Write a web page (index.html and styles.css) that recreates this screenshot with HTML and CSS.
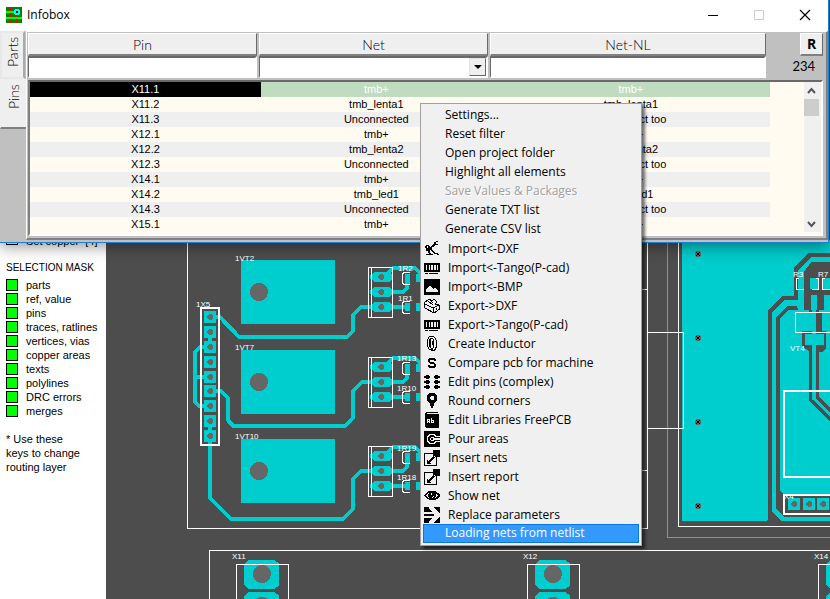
FILE: index.html
```html
<!DOCTYPE html>
<html lang="en">
<head>
<meta charset="utf-8">
<title>Infobox</title>
<link rel="stylesheet" href="styles.css">
</head>
<body>
<main class="editor">
  <aside class="layers">
    <p class="layer-hint"><span class="hint-box"></span>Set copper&nbsp; [4]</p>
    <h2 class="layers-title">SELECTION MASK</h2>
    <ul class="mask">
      <li><label><input type="checkbox" checked>parts</label></li>
      <li><label><input type="checkbox" checked>ref, value</label></li>
      <li><label><input type="checkbox" checked>pins</label></li>
      <li><label><input type="checkbox" checked>traces, ratlines</label></li>
      <li><label><input type="checkbox" checked>vertices, vias</label></li>
      <li><label><input type="checkbox" checked>copper areas</label></li>
      <li><label><input type="checkbox" checked>texts</label></li>
      <li><label><input type="checkbox" checked>polylines</label></li>
      <li><label><input type="checkbox" checked>DRC errors</label></li>
      <li><label><input type="checkbox" checked>merges</label></li>
    </ul>
    <p class="note">* Use these<br>keys to change<br>routing layer</p>
  </aside>
  <svg class="board" aria-label="Board layout">
    <defs>
      <g id="pad3">
        <path class="cu" d="M370 305h2l2-3h16l2 3v4l-2 3h-16l-2-3h-2zM370 290h2l2-3h16l2 3v4l-2 3h-16l-2-3h-2zM370 275h2l2-3h16l2 3v4l-2 3h-16l-2-3h-2z"/>
        <path class="hole" d="M378 276l2-2h2l2 2v2l-2 2h-2l-2-2zM378 291l2-2h2l2 2v2l-2 2h-2l-2-2zM378 306l2-2h2l2 2v2l-2 2h-2l-2-2z"/>
        <path class="tr" d="M386 275L393 268H415L421 274M390 292H403L407 288V280M390 307H408"/>
        <path class="cu" d="M405 274h5v10h-5zM405 303h5v8h-5zM416 274h6v8h-6zM416 303h6v8h-6z"/>
        <path class="ln" d="M368.500 267.500h24v50h-24zM371.500 267.500v50M410 272.500h-6l-2 2v8l2 2h6M410 301.500h-6l-2 2v8l2 2h6"/>
      </g>
      <g id="term">
        <path class="cu" d="M8 564l2-2 3-2h25l3 2 2 2v21l-2 2-3 2h-25l-3-2-2-2zM8 596l2-2 3-2h25l3 2 2 2v30h-35z"/>
        <circle class="hole" cx="26" cy="574" r="9"/><circle class="hole" cx="26" cy="606" r="9"/>
        <path class="ln" d="M.5 610V564.500h52V610"/>
      </g>
      <g id="sq"><path class="cu" d="M-6-6h12v12h-12z"/><path class="hole" d="M-3-1l2-2h2l2 2v2l-2 2h-2l-2-2z"/></g>
      <g id="via"><circle class="hole" r="3"/><path d="M-2-2h1v1h-1zM1-2h1v1h-1zM-1-1h2v2h-2zM-2 1h1v1h-1zM1 1h1v1h-1z"/></g>
    </defs>
    <g class="sheet" transform="translate(-106 0)">
      <path class="ln" d="M187.500 240V528.500H647.500V240M640 289.500h7M640 470.500h7"/>

      <path class="cu" d="M241 260h94v64h-94zM241 350h94v64h-94zM241 439h94v64h-94z"/>
      <circle class="hole" cx="259" cy="292" r="9"/><circle class="hole" cx="259" cy="382" r="9"/><circle class="hole" cx="259" cy="471" r="9"/>

      <path class="tr" d="M210 317H220L239 337H347L353 331V315L361 307H372"/>
      <path class="tr" d="M210 347H200L195 352V402L199 406H210M195 377H210"/>
      <path class="tr" d="M210 391H221L228 398V420L233 426H345L353 418V391L362 382H372"/>
      <path class="tr" d="M210 421V498L231 519H343L353 509V479L361 471H372M210 332V347"/>
      <use href="#sq" x="210" y="317"/><use href="#sq" x="210" y="332"/><use href="#sq" x="210" y="347"/>
      <use href="#sq" x="210" y="362"/><use href="#sq" x="210" y="377"/><use href="#sq" x="210" y="391"/>
      <use href="#sq" x="210" y="406"/><use href="#sq" x="210" y="421"/><use href="#sq" x="210" y="436"/>
      <path class="ln thick" d="M201 308h18v137h-18z"/>

      <use href="#pad3"/><use href="#pad3" y="90"/><use href="#pad3" y="179"/>

      <path class="cu" d="M682 240H830V521H682z"/>
      <path class="bg" d="M766 521.500l2-2V310l15-14h11v-28l14-15h22v4h-19l-13 13v30h-14l-12 12V511l9 10h49v9h-64z"/>
      <path class="bg" d="M776 521V317l11-11h10l1 4h-9l-9 8V491l4 3h46v23h-46l-8-8z"/>
      <path class="cu" d="M772 312l12-12h14v6h-11l-11 11V509l8 8h46v4h-48l-10-10z"/>
      <path class="bg" d="M804 272l7-10h19v33h-6v15h-7v-15h-6v15h-7z"/>
      <path class="cu" d="M798 278h6v11h-6zM810 278h9v11h-9zM822 278h8v11h-8z"/>
      <path class="bg" d="M809 312h3v19h10v-19h-3v-2h-10zM802 331h24v17l-4 4h-3v45l13 13v5l-16-16v-47h-4v47l18 18v5l-21-21v-50l-7-5z"/>
      <path class="cu" d="M805 334h19v11h-19zM812 310h4v90h-4z"/>
      <path class="ln" d="M799 278.500h-2.500v11h7M816 278.500h2.500v11h-7M825 278.500h-2.500v11h8M830 312.500h-34.500v20H830"/>
      <path class="ln thick" d="M830 391H784V477H830M830 495H784V514H830"/>
      <use href="#sq" x="794" y="504"/><use href="#sq" x="809" y="504"/><use href="#sq" x="823" y="504"/>
      <path class="thin" d="M667.500 240V537.500H1400"/>
      <path class="ln" d="M678.500 240V526.500H1400M647.500 332.500h35.500v96h-35.500"/>
      <use href="#via" x="698" y="254"/><use href="#via" x="698" y="338"/><use href="#via" x="698" y="422"/><use href="#via" x="698" y="506"/>

      <path class="ln" d="M209.500 1400V550.500H1400"/>
      <use href="#term" x="236"/><use href="#term" x="527"/><use href="#term" x="818"/>

      <g class="ref">
        <text x="235" y="261">1VT2</text><text x="235" y="350">1VT7</text><text x="235" y="439">1VT10</text>
        <text x="196" y="307">1X5</text>
        <text x="398" y="271">1R2</text><text x="398" y="301">1R1</text>
        <text x="397" y="361">1R13</text><text x="397" y="391">1R10</text>
        <text x="397" y="451">1R19</text><text x="397" y="480">1R18</text>
        <text x="793" y="277">R3</text><text x="818" y="277">R7</text><text x="790" y="351">VT4</text>
        <text x="784" y="499">X4</text>
        <text x="232" y="559">X11</text><text x="523" y="559">X12</text><text x="814" y="559">X14</text>
      </g>
    </g>
  </svg>
</main>

<section class="window">
  <header class="titlebar">
    <svg class="app-icon" width="16" height="16" viewBox="0 0 16 16"><path fill="#008000" d="M0 0h16v16H0z"/><path fill="#f00" d="M4 0h2v16H4zM10 8h2v8h-2z"/><path fill="#0f0" d="M0 4h10v2H0zM0 10h16v2H0z"/><path fill="#0ff" d="M9 2h4v1h1v4h-1v1H9V7H8V3h1z"/><path fill="#000" d="M10 4h2v2h-2z"/></svg>
    <h1 class="title">Infobox</h1>
    <div class="caption-buttons">
      <button type="button" aria-label="Minimize"><svg width="12" height="12"><path d="M1 6.500h10" stroke="#000"/></svg></button>
      <button type="button" aria-label="Maximize" disabled><svg width="12" height="12"><path d="M1.500 1.500h9v9h-9z" fill="none" stroke="#ccc"/></svg></button>
      <button type="button" aria-label="Close"><svg class="smooth" width="12" height="12"><path d="M1 1l10 10M11 1L1 11" stroke="#000" stroke-width="1.200"/></svg></button>
    </div>
  </header>
  <div class="client">
    <nav class="tabs">
      <button type="button" class="tab">Parts</button>
      <button type="button" class="tab current">Pins</button>
    </nav>
    <div class="pane">
      <div class="filters">
        <div class="fields">
          <button type="button" class="head">Pin</button>
          <button type="button" class="head">Net</button>
          <button type="button" class="head">Net-NL</button>
          <input class="field" type="text" aria-label="Filter by pin">
          <div class="combo">
            <select class="field" aria-label="Filter by net"><option></option></select>
            <span class="drop"></span>
          </div>
          <input class="field" type="text" aria-label="Filter by Net-NL">
        </div>
        <div class="side">
          <button type="button" class="reset">R</button>
          <output class="count">234</output>
        </div>
      </div>
      <div class="list">
        <table class="grid">
          <colgroup><col class="c-pin"><col class="c-net"><col class="c-nl"></colgroup>
          <tbody>
            <tr class="selected"><td>X11.1</td><td>tmb+</td><td>tmb+</td></tr>
            <tr><td>X11.2</td><td>tmb_lenta1</td><td>tmb_lenta1</td></tr>
            <tr><td>X11.3</td><td>Unconnected</td><td>Unconnect too</td></tr>
            <tr><td>X12.1</td><td>tmb+</td><td>tmb+</td></tr>
            <tr><td>X12.2</td><td>tmb_lenta2</td><td>tmb_lenta2</td></tr>
            <tr><td>X12.3</td><td>Unconnected</td><td>Unconnect too</td></tr>
            <tr><td>X14.1</td><td>tmb+</td><td>tmb+</td></tr>
            <tr><td>X14.2</td><td>tmb_led1</td><td>tmb_led1</td></tr>
            <tr><td>X14.3</td><td>Unconnected</td><td>Unconnect too</td></tr>
            <tr><td>X15.1</td><td>tmb+</td><td>tmb+</td></tr>
          </tbody>
        </table>
        <div class="scrollbar">
          <svg width="15" height="17"><path d="M4 11l3.500-4 3.500 4" fill="none" stroke="#555" stroke-width="2"/></svg>
          <span class="thumb"></span>
          <svg class="down" width="15" height="17"><path d="M4 7l3.500 4L11 7" fill="none" stroke="#555" stroke-width="2"/></svg>
        </div>
      </div>
    </div>
  </div>
</section>

<menu class="context">
  <li><button type="button">Settings...</button></li>
  <li><button type="button">Reset filter</button></li>
  <li><button type="button">Open project folder</button></li>
  <li><button type="button">Highlight all elements</button></li>
  <li><button type="button" disabled>Save Values &amp; Packages</button></li>
  <li><button type="button">Generate TXT list</button></li>
  <li><button type="button">Generate CSV list</button></li>
  <li><button type="button" class="has-icon"><svg class="ico" viewBox="0 0 16 16"><path d="M12 0h2v1h-2zM10 1h2v2h2v1h-3v1h-1v1H8v3h1v1h1v1h1v1h3v1h1v1h-2v-1h-3v-1H9v-1H8v-1H7v-1H6v3h1v1h2v1H2v-1h3v-1H4v-2H2V7H1V5h1V4h3v1h1v1h1V5h1V4h1V3h1z"/><path class="inv" d="M3 5h1v2H3z"/></svg>Import&lt;-DXF</button></li>
  <li><button type="button" class="has-icon"><svg class="ico" viewBox="0 0 16 16"><path fill-rule="evenodd" d="M0 3h16v9H0zM2 5v5h1V5zM5 5v5h1V5zM7 5v5h2V5zM10 5v5h2V5zM13 5v5h1V5zM1 13h3v1H1zM5 13h9v1H5z"/></svg>Import&lt;-Tango(P-cad)</button></li>
  <li><button type="button" class="has-icon"><svg class="ico" viewBox="0 0 16 16"><path fill-rule="evenodd" d="M0 0h16v16H0zM2 13h12v-1l-3-3h-1l-1 1-3-3H5l-3 4z"/></svg>Import&lt;-BMP</button></li>
  <li><button type="button" class="has-icon"><svg class="ico line" viewBox="0 0 16 16"><path d="M.5 4.500L5 1l3 2 2-2 3 3-2 2 4 1v4.500l-5 3.500-9-5zM1 6l8 4 6-3M9 10v5M4 3l5 4M7 3l2 2M12 10v2"/></svg>Export-&gt;DXF</button></li>
  <li><button type="button" class="has-icon"><svg class="ico" viewBox="0 0 16 16"><path fill-rule="evenodd" d="M0 3h16v9H0zM2 5v5h1V5zM5 5v5h1V5zM7 5v5h2V5zM10 5v5h2V5zM13 5v5h1V5zM1 13h3v1H1zM5 13h9v1H5z"/></svg>Export-&gt;Tango(P-cad)</button></li>
  <li><button type="button" class="has-icon"><svg class="ico line" viewBox="0 0 16 16"><path d="M3.500 3.500l2-3h4l2 2 1 3v5l-2 4h-3l-3-2-1-3zM6.500 3v8l1 2h1l1-2V4l-1-2h-1zM5.500 3v8M8.500 5v4"/></svg>Create Inductor</button></li>
  <li><button type="button" class="has-icon"><svg class="ico" viewBox="0 0 16 16"><path d="M5 3h6v1h1v2h-2V5H6v2h4v1h1v1h1v3h-1v1H5v-1H4v-2h2v1h4V9H6V8H5V7H4V4h1z"/></svg>Compare pcb for machine</button></li>
  <li><button type="button" class="has-icon"><svg class="ico" viewBox="0 0 16 16"><path d="M2 1h3v1h1v2H5v1H2V4H0V2h2zM2 6h3v1h1v2H5v1H2V9H0V7h2zM2 11h3v1h1v2H5v1H2v-1H0v-2h2zM11 1h3v1h2v2h-2v1h-3V4h-1V2h1zM11 6h3v1h2v2h-2v1h-3V9h-1V7h1zM11 11h3v1h2v2h-2v1h-3v-1h-1v-2h1z"/></svg>Edit pins (complex)</button></li>
  <li><button type="button" class="has-icon"><svg class="ico" viewBox="0 0 16 16"><path fill-rule="evenodd" d="M6 0h4l2 1 1 2v4l-3 4-1 4H7l-1-4-3-4V3l1-2zM7 3L6 4v2l1 1h2l1-1V4L9 3z"/></svg>Round corners</button></li>
  <li><button type="button" class="has-icon"><svg class="ico" viewBox="0 0 16 16"><path d="M2 0h12v1H3v1h12v14H3l-2-1V1z"/><path class="inv" fill-rule="evenodd" d="M3 7h3v4H5v-1H4v1H3zM4 8v1h1V8zM7 6h1v2h2v3H7zM8 9v1h1V9z"/></svg>Edit Libraries FreePCB</button></li>
  <li><button type="button" class="has-icon"><svg class="ico" viewBox="0 0 16 16"><path d="M0 0h16v16H0z"/><path class="inv" fill-rule="evenodd" d="M6 3h4l2 2h4v1h-5L9 4H6L4 6v4l2 2h3l2-2h5v1h-4l-2 2H6l-3-2V5zM7 6h2l1 1h6v2h-6l-1 1H7L6 9V7zM7 7v2h2V7z"/></svg>Pour areas</button></li>
  <li><button type="button" class="has-icon"><svg class="ico" viewBox="0 0 16 16"><path d="M0 3h9v1H1v11h11V7h1v9H0zM9 0h7v7h-5V6H9zM9 6h1v1h1v1h-1v1H9v1H8v1H7v1H6v1h1v1H3v-4h1v1h1v-1h1V9h1V8h1V7h1z"/></svg>Insert nets</button></li>
  <li><button type="button" class="has-icon"><svg class="ico" viewBox="0 0 16 16"><path d="M0 3h9v1H1v11h11V7h1v9H0zM9 0h7v7h-5V6H9zM9 6h1v1h1v1h-1v1H9v1H8v1H7v1H6v1h1v1H3v-4h1v1h1v-1h1V9h1V8h1V7h1z"/></svg>Insert report</button></li>
  <li><button type="button" class="has-icon"><svg class="ico" viewBox="0 0 16 16"><path fill-rule="evenodd" d="M5 3h6l3 2 2 2v1l-3 3-3 1H6l-3-1-3-3V7l2-2zM5 5L2 7v1l3 2-1-2V6zM11 5l1 1v2l-1 2 3-2V7zM7 5v2h1V5zM9 8l-1 1v1l2-1V8z"/></svg>Show net</button></li>
  <li><button type="button" class="has-icon"><svg class="ico" viewBox="0 0 16 16"><path d="M0 0h16v16H0z"/><path class="inv" d="M0 5h8L5 2V0h4l7 7v2l-7 7H5v-2l3-3H0V9h9l1-1-1-1H0z"/></svg>Replace parameters</button></li>
  <li><button type="button" class="active">Loading nets from netlist</button></li>
</menu>
</body>
</html>
```

FILE: styles.css
```css
* { box-sizing: border-box; }

html, body { height: 100%; }

body {
  margin: 0;
  overflow: hidden;
  background: #4d4d4d;
  color: #000;
  font-family: "Liberation Sans", Arial, sans-serif;
  font-size: 11px;
}

button, input, select {
  margin: 0;
  padding: 0;
  border: 0;
  border-radius: 0;
  color: inherit;
  font: inherit;
  appearance: none;
}

/* Editor behind the window */
.editor {
  display: flex;
  min-height: 100%;
}

.layers {
  flex: 0 0 106px;
  padding: 234px 0 0 6px;
  background: #fff;
  line-height: 14px;
}

.layer-hint {
  display: flex;
  gap: 8px;
  margin: 0 0 13px;
}

.hint-box {
  width: 12px;
  height: 11px;
  border: 1px solid #000;
}

.layers-title {
  margin: 0 0 3px;
  font-size: 10px;
  font-weight: 400;
}

.mask {
  margin: 0 0 14px;
  padding: 0;
  list-style: none;
}

.mask label {
  display: flex;
  align-items: center;
  gap: 8px;
  height: 14px;
}

.mask input {
  width: 12px;
  height: 12px;
  border: 1px solid #000;
  background: #0f0;
}

.note { margin: 0; }

.board {
  flex: 1;
  min-width: 0;
  background: #4d4d4d;
  shape-rendering: crispEdges;
}

.cu { fill: #00cdcd; }
.bg { fill: #4d4d4d; }
.hole { fill: #666; }
.tr { fill: none; stroke: #00cdcd; stroke-width: 4; }
.thin { fill: none; stroke: #00cdcd; }
.ln { fill: none; stroke: #fff; }
.thick { stroke-width: 2; }
.ref { fill: #fff; font-size: 8px; }

/* Infobox window */
.window {
  position: absolute;
  top: 0;
  left: 0;
  right: 1px;
  border: solid #1883d7;
  border-width: 0 1px 1px 0;
  background: #c0c0c0;
  box-shadow: 0 4px 14px rgba(0, 0, 0, .4);
}

.titlebar {
  display: flex;
  align-items: center;
  height: 31px;
  padding: 0 0 2px 6px;
  background: #fff;
}

.app-icon { shape-rendering: crispEdges; }

.title {
  flex: 1;
  margin: 0 0 0 5px;
  font: 400 12px "Open Sans", sans-serif;
}

.caption-buttons { display: flex; }

.caption-buttons button {
  display: flex;
  align-items: center;
  justify-content: center;
  width: 46px;
  height: 28px;
  background: none;
}

.client {
  display: flex;
  height: 211px;
}

.tabs {
  display: flex;
  flex: 0 0 26px;
  flex-direction: column;
}

.tab {
  width: 25px;
  height: 48px;
  padding-bottom: 4px;
  border: 2px solid #e8e8e8;
  border-left-color: #aaa;
  background: #efefef;
  font: 300 14px Lato, sans-serif;
  text-align: end;
  writing-mode: vertical-rl;
  transform: rotate(180deg);
}

.tab.current {
  width: 26px;
  height: 50px;
  border-color: #808080 #efefef #efefef;
  border-width: 2px 1px 1px 0;
}

.pane {
  flex: 1;
  min-width: 0;
  margin-bottom: 2px;
  padding: 1px 3px 1px 1px;
  border: 1px solid #fff;
  border-right: 2px solid #808080;
  border-bottom: 2px solid #808080;
}

.filters {
  display: flex;
  margin-bottom: 2px;
}

.fields {
  display: grid;
  flex: 1;
  grid-template-columns: 229fr 229fr 276fr;
  grid-template-rows: 23px 22px;
  column-gap: 2px;
}

.head, .reset {
  border: 1px solid #fff;
  border-right-color: #696969;
  border-bottom: 2px solid #808080;
  background: #efefef;
}

.head { font: 300 14px Lato, sans-serif; }

.field {
  width: 100%;
  height: 22px;
  border: 2px solid #fff;
  border-top-color: #696969;
  border-left: 1px solid #696969;
  background: #fff;
}

.combo { position: relative; }

.drop {
  position: absolute;
  top: 2px;
  right: 2px;
  display: flex;
  align-items: center;
  justify-content: center;
  width: 17px;
  height: 18px;
  border: 1px solid #e3e3e3;
  border-right-color: #696969;
  border-bottom-color: #696969;
  background: #efefef;
  pointer-events: none;
}

.drop::before {
  content: "";
  border: 4px solid transparent;
  border-top-color: #000;
  border-bottom: 0;
}

.side {
  display: flex;
  flex: 0 0 57px;
  flex-direction: column;
  align-items: flex-end;
}

.reset {
  width: 23px;
  height: 23px;
  font: 700 14px "Open Sans", sans-serif;
  line-height: 18px;
}

.count {
  padding: 2px 8px 0 0;
  font: 13px Lato, sans-serif;
}

.list {
  display: flex;
  height: 156px;
  padding-bottom: 2px;
  border: 2px solid #fff;
  border-top-color: #696969;
  border-left-color: #808080;
  background: #fffbf0;
}

.grid {
  flex: 1;
  margin-right: 34px;
  border-collapse: collapse;
  table-layout: fixed;
}

.c-pin { width: 31.2%; }
.c-net { width: 31.2%; }

.grid td {
  height: 15px;
  padding: 0;
  line-height: 15px;
  text-align: center;
}

.grid tr:nth-child(odd) { background: #efefef; }
.grid tr:nth-child(even) { background: #fffbf0; }

.grid tr.selected {
  background: #c0dcc0;
  color: #fff;
}

.grid tr.selected td:first-child { background: #000; }

.scrollbar {
  display: flex;
  flex: 0 0 17px;
  flex-direction: column;
  background: #f0f0f0;
}

.thumb {
  width: 15px;
  height: 17px;
  background: #cdcdcd;
}

.down { margin-top: auto; }

/* Context menu */
.context {
  position: absolute;
  top: 103px;
  left: 420px;
  width: 222px;
  margin: 0;
  padding: 2px;
  border: 1px solid #a0a0a0;
  background: #f0f0f0;
  box-shadow: 3px 3px 3px rgba(0, 0, 0, .55);
  list-style: none;
}

.context button {
  display: flex;
  align-items: center;
  width: 100%;
  height: 19px;
  padding: 0 0 2px 22px;
  background: none;
  font: 12px "Open Sans", sans-serif;
  white-space: nowrap;
}

.context button:disabled {
  color: #a0a0a0;
  text-shadow: 1px 1px #fff;
}

.context .has-icon {
  gap: 8px;
  padding: 0 0 0 1px;
}

.context .active {
  border: 1px solid #0a78d7;
  padding-left: 21px;
  background: #3399ff;
  color: #fff;
}

.ico {
  width: 16px;
  height: 16px;
  fill: #000;
  shape-rendering: crispEdges;
}

.ico.line {
  fill: none;
  stroke: #000;
}

.ico .inv { fill: #f0f0f0; }
```
